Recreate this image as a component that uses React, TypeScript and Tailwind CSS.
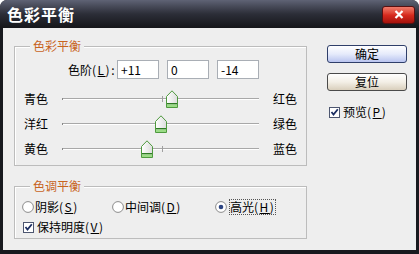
import React from "react";

const font = { fontFamily: '"Noto Sans CJK SC", "Noto Sans", sans-serif' };

function Thumb() {
  return (
    <svg width="12" height="18" viewBox="0 0 12 18">
      <defs>
        <linearGradient id="tf" x1="0" y1="0" x2="1" y2="0">
          <stop offset="0" stopColor="#ffffff" />
          <stop offset="1" stopColor="#dcdcdc" />
        </linearGradient>
      </defs>
      <path d="M0.5 6.5 L6 0.8 L11.5 6.5 V17.5 H0.5 Z" fill="url(#tf)" stroke="#4f9a3f" />
      <rect x="1" y="13" width="10" height="1.5" fill="#2f7a24" />
      <rect x="1" y="14.5" width="10" height="2.5" fill="#9bdc86" />
    </svg>
  );
}

function Key({ k, colon }: { k: string; colon?: boolean }) {
  return (
    <span className="tracking-[1.5px]">
      (<span className="underline">{k}</span>){colon ? ":" : ""}
    </span>
  );
}

function Slider({ left, right, value }: { left: string; right: string; value: number }) {
  const x = Math.round(99 + value * 0.98 - 6);
  return (
    <div className="h-[25px] flex items-center pl-[9px]">
      <span className="w-[38px] leading-[16px]">{left}</span>
      <div className="relative w-[197px] h-[18px]">
        <div className="absolute left-0 right-0 top-[8px] h-[1px] bg-[#a8a8a8]" />
        <div className="absolute left-0 right-0 top-[9px] h-[1px] bg-white" />
        <div className="absolute left-[0px] top-[8px] w-[1px] h-[2px] bg-[#888]" />
        <div className="absolute left-[100px] top-[6px] w-[1px] h-[6px] bg-[#a0a0a0]" />
        <div className="absolute top-0" style={{ left: x }}>
          <Thumb />
        </div>
      </div>
      <span className="ml-[14px] leading-[16px]">{right}</span>
    </div>
  );
}

function Check() {
  return (
    <svg width="11" height="11" viewBox="0 0 11 11" className="shrink-0">
      <rect x="0.5" y="0.5" width="10" height="10" fill="#fff" stroke="#4d5670" />
      <path d="M2.5 5 L4.5 7.5 L8.8 2.2" fill="none" stroke="#1d2f63" strokeWidth="1.8" />
    </svg>
  );
}

function Radio({ on }: { on?: boolean }) {
  return (
    <svg width="12" height="12" viewBox="0 0 12 12" className="shrink-0">
      <circle cx="6" cy="6" r="5.4" fill="#fff" stroke="#8c8c8c" />
      {on && <circle cx="6" cy="6" r="2.3" fill="#2c4482" />}
    </svg>
  );
}

function Group({ title, className, children }: { title: string; className: string; children: React.ReactNode }) {
  return (
    <div className={"relative w-[293px] border border-[#bcbcbc] shadow-[inset_1px_1px_0_#ffffff] " + className}>
      <span className="absolute left-[15px] top-[-9px] px-[3px] bg-[#eeeeee] text-[#c8641e] leading-[16px]">{title}</span>
      {children}
    </div>
  );
}

export default function App() {
  return (
    <div style={font} className="w-[419px] h-[254px] bg-[#18191e] rounded-t-[7px] flex flex-col overflow-hidden text-[12px] text-black">
      <div className="h-[28px] shrink-0 flex items-center justify-between pl-[7px] pr-[4px] bg-gradient-to-b from-[#5f6375] via-[#2c2e38] to-[#15161a]">
        <span className="text-white font-bold text-[16px] leading-[20px] tracking-[1px]">色彩平衡</span>
        <div className="w-[33px] h-[18px] mt-[1px] rounded-[3px] border border-[#5a1010] bg-gradient-to-b from-[#f07a6a] via-[#d82a1e] to-[#a5120c] flex items-center justify-center">
          <svg width="10" height="9" viewBox="0 0 10 9">
            <path d="M1.5 1 L8.5 8 M8.5 1 L1.5 8" stroke="#fff" strokeWidth="2.2" />
          </svg>
        </div>
      </div>
      <div className="mx-[3px] mb-[4px] flex-1 bg-[#eeeeee] flex">
        <div className="pl-[11px] pt-[18px]">
          <Group title="色彩平衡" className="h-[120px]">
            <div className="flex items-center mt-[13px]">
              <span className="w-[102px] text-right pr-[1px] leading-[16px]">
                色阶<Key k="L" colon />
              </span>
              {["+11", "0", "-14"].map((v, i) => (
                <div key={i} className={"w-[42px] h-[19px] bg-white border border-[#a9aeb5] pl-[3px] leading-[17px] " + (i > 0 ? "ml-[8px]" : "")}>
                  {v}
                </div>
              ))}
            </div>
            <div className="mt-[7px]">
              <Slider left="青色" right="红色" value={11} />
              <Slider left="洋红" right="绿色" value={0} />
              <Slider left="黄色" right="蓝色" value={-14} />
            </div>
          </Group>
          <Group title="色调平衡" className="h-[53px] mt-[20px]">
            <div className="flex items-center h-[16px] mt-[12px] pl-[7px]">
              <div className="w-[90px] flex items-center gap-[1px]">
                <Radio />
                <span className="leading-[16px]">阴影<Key k="S" /></span>
              </div>
              <div className="w-[103px] flex items-center gap-[1px]">
                <Radio />
                <span className="leading-[16px]">中间调<Key k="D" /></span>
              </div>
              <div className="flex items-center gap-[2px]">
                <Radio on />
                <span className="leading-[14px] border border-dotted border-[#555]">高光<Key k="H" /></span>
              </div>
            </div>
            <div className="flex items-center h-[16px] mt-[4px] pl-[8px] gap-[3px]">
              <Check />
              <span className="leading-[16px]">保持明度<Key k="V" /></span>
            </div>
          </Group>
        </div>
        <div className="ml-[20px] pt-[17px] flex flex-col">
          <button className="w-[80px] h-[18px] rounded-[3px] border border-[#2f3f6a] bg-gradient-to-b from-[#ffffff] via-[#e6ebfb] to-[#b9c4ef] text-[12px] leading-[16px]">
            确定
          </button>
          <button className="w-[80px] h-[18px] mt-[10px] rounded-[3px] border border-[#4a4a4a] bg-gradient-to-b from-[#ffffff] via-[#f3efe6] to-[#d9cfbc] text-[12px] leading-[16px]">
            复位
          </button>
          <div className="flex items-center h-[16px] mt-[13px] ml-[2px] gap-[3px]">
            <Check />
            <span className="leading-[16px]">预览<Key k="P" /></span>
          </div>
        </div>
      </div>
    </div>
  );
}
